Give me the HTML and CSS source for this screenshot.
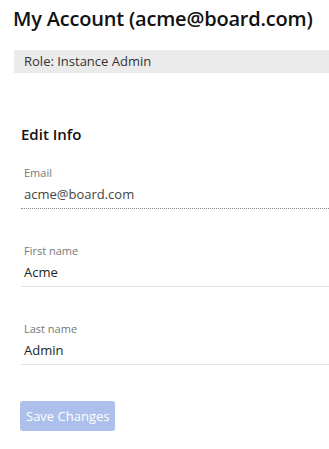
FILE: index.html
```html
<!DOCTYPE html>
<html lang="en">
<head>
  <meta charset="UTF-8" />
  <meta name="viewport" content="width=device-width, initial-scale=1.0"/>
  <title>My Account</title>
  <link rel="stylesheet" href="styles.css">
</head>
<body>
  <!-- Page header -->
  <h1 class="page-title">My Account (acme@board.com)</h1>
  <div class="role-bar">Role: Instance Admin</div>

  <!-- Edit info form -->
  <div class="edit-info">
    <h3>Edit Info</h3>
    <div class="field">
      <div class="field-label">Email</div>
      <div class="field-value readonly">acme@board.com</div>
    </div>
    <div class="field">
      <div class="field-label">First name</div>
      <div class="field-value">Acme</div>
    </div>
    <div class="field">
      <div class="field-label">Last name</div>
      <div class="field-value">Admin</div>
    </div>
    <button class="save-btn" disabled>Save Changes</button>
  </div>
</body>
</html>
```

FILE: styles.css
```css
* {
  box-sizing: border-box;
}
body {
  margin: 0;
  font-family: "Open Sans", Arial, sans-serif;
  background-color: #fff;
  color: #222;
  overflow: hidden;
}
.page-title {
  margin: 5px 0 0 13px;
  font-size: 20px;
  line-height: 28px;
  font-weight: 600;
  letter-spacing: -0.2px;
  color: #111;
  white-space: nowrap;
}
.role-bar {
  margin: 17px 0 0 14px;
  height: 23px;
  padding-left: 10px;
  background-color: #ebebeb;
  font-size: 13px;
  line-height: 23px;
  color: #333;
}
.edit-info {
  padding: 51px 0 0 21px;
}
.edit-info h3 {
  margin: 0 0 19px 0;
  font-size: 15px;
  line-height: 21px;
  font-weight: 600;
  color: #111;
}
.field {
  margin-bottom: 33px;
}
.field-label {
  padding-left: 3px;
  font-size: 11px;
  line-height: 17px;
  color: #777;
}
.field-value {
  padding: 3px 3px 4px;
  font-size: 13px;
  line-height: 20px;
  color: #222;
  border-bottom: 1px solid #e3e3e3;
}
.field-value.readonly {
  color: #444;
  border-bottom: 1px dotted #888;
}
.save-btn {
  margin: 3px 0 0 -1px;
  height: 30px;
  padding: 0 6px;
  border: none;
  border-radius: 3px;
  background-color: #adbfeb;
  color: #fff;
  font-family: "Open Sans", Arial, sans-serif;
  font-size: 13px;
}
```
